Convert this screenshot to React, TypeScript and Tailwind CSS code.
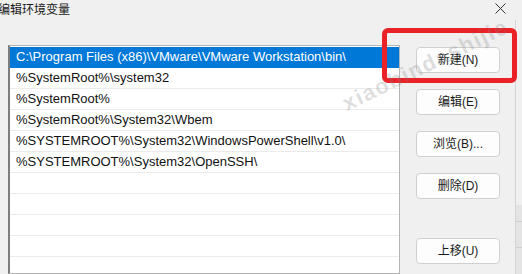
import React from "react";

const paths = [
  "C:\\Program Files (x86)\\VMware\\VMware Workstation\\bin\\",
  "%SystemRoot%\\system32",
  "%SystemRoot%",
  "%SystemRoot%\\System32\\Wbem",
  "%SYSTEMROOT%\\System32\\WindowsPowerShell\\v1.0\\",
  "%SYSTEMROOT%\\System32\\OpenSSH\\",
  "",
  "",
  "",
  "",
  "",
];

const font = { fontFamily: '"Liberation Sans", "Noto Sans CJK SC", sans-serif' };

function SideButton({ label, className = "" }: { label: string; className?: string }) {
  return (
    <button
      className={`flex h-[26px] w-[84px] items-center justify-center rounded-[4px] border border-[#d0d0d0] bg-[#fdfdfd] text-[12px] text-[#1a1a1a] ${className}`}
    >
      {label}
    </button>
  );
}

export default function App() {
  return (
    <div
      className="relative flex h-[274px] w-[522px] flex-col overflow-hidden bg-[#f0f0f0]"
      style={font}
    >
      {/* Title bar */}
      <div className="flex h-[20px] shrink-0 items-center justify-between">
        <span className="ml-[-2px] text-[12px] leading-none text-[#1a1a1a]">编辑环境变量</span>
        <svg width="11" height="11" viewBox="0 0 11 11" className="mr-[16px] mt-[-4px]">
          <path d="M0.5 0.5 L10.5 10.5 M10.5 0.5 L0.5 10.5" stroke="#333" strokeWidth="1" />
        </svg>
      </div>

      <div className="flex min-h-0 flex-1">
        {/* Path list */}
        <div className="ml-[8px] mt-[25px] w-[392px] border border-[#b5b5b5] border-l-[#7d7d7d] border-l-2 bg-white pt-px">
          {paths.map((p, i) => (
            <div
              key={i}
              className={`h-[21px] truncate border-b pl-[6px] text-[13px] leading-[20px] ${
                i === 0
                  ? "border-[#0078d7] bg-[#0078d7] text-white"
                  : "border-[#ebebeb] text-[#111]"
              }`}
            >
              {p}
            </div>
          ))}
        </div>

        {/* Buttons */}
        <div className="ml-[16px] mt-[27px] flex flex-col gap-[16px]">
          <SideButton label="新建(N)" />
          <SideButton label="编辑(E)" />
          <SideButton label="浏览(B)..." />
          <SideButton label="删除(D)" />
          <SideButton label="上移(U)" className="mt-[23px]" />
        </div>

        {/* Window behind */}
        <div className="ml-[15px] flex w-[7px] flex-col border-l border-[#d4d4d4]">
          <div className="h-[185px]" />
          <div className="flex-1 bg-[#e4e4e4]">
            <div className="h-[17px] border-b border-[#cfcfcf]" />
            <div className="h-[26px] border-b border-[#cfcfcf]" />
          </div>
        </div>
      </div>

      {/* Highlight box */}
      <div className="absolute left-[382px] top-[28px] h-[55px] w-[135px] rounded-[6px] border-[5px] border-[#ea2227]" />

      {/* Watermark */}
      <div
        className="pointer-events-none absolute left-[344px] top-[92px] origin-left -rotate-[26deg] text-[22px] font-bold leading-[26px] tracking-[1.5px] text-[#808080]/25"
        style={{ fontFamily: '"Liberation Sans", sans-serif' }}
      >
        xiaobindashijie
      </div>
    </div>
  );
}
